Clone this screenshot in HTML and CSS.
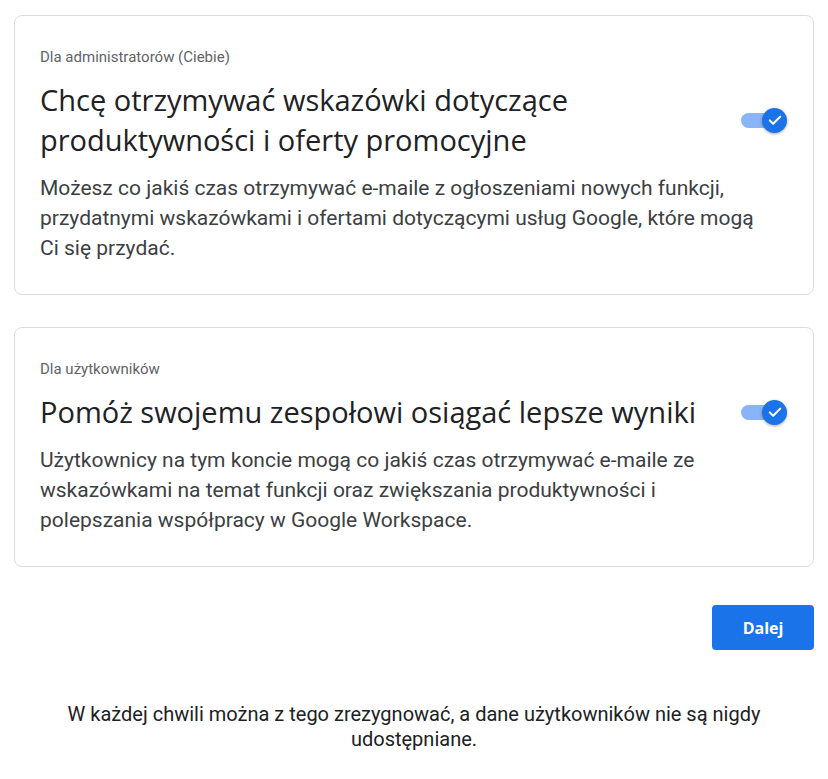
FILE: index.html
```html
<!DOCTYPE html>
<html>
<head>
	<meta charset="utf-8">
	<title>Wskazówki i oferty</title>
	<link rel="stylesheet" href="styles.css">
</head>
<body>
	<div class="strona">
		<div class="karta">
			<div class="etykieta">Dla administratorów (Ciebie)</div>
			<div class="wiersz">
				<h2 class="tytul">Chcę otrzymywać wskazówki dotyczące produktywności i oferty promocyjne</h2>
				<div class="przelacznik">
					<span class="tor"></span>
					<span class="galka">
						<svg width="18" height="18" viewBox="0 0 24 24"><path d="M5 12.5l4.5 4.5 9.5-9.5" fill="none" stroke="#fff" stroke-width="2.8" stroke-linecap="round" stroke-linejoin="round"/></svg>
					</span>
				</div>
			</div>
			<p class="opis">Możesz co jakiś czas otrzymywać e-maile z ogłoszeniami nowych funkcji, przydatnymi wskazówkami i ofertami dotyczącymi usług Google, które mogą Ci się przydać.</p>
		</div>

		<div class="karta">
			<div class="etykieta">Dla użytkowników</div>
			<div class="wiersz">
				<h2 class="tytul">Pomóż swojemu zespołowi osiągać lepsze wyniki</h2>
				<div class="przelacznik">
					<span class="tor"></span>
					<span class="galka">
						<svg width="18" height="18" viewBox="0 0 24 24"><path d="M5 12.5l4.5 4.5 9.5-9.5" fill="none" stroke="#fff" stroke-width="2.8" stroke-linecap="round" stroke-linejoin="round"/></svg>
					</span>
				</div>
			</div>
			<p class="opis">Użytkownicy na tym koncie mogą co jakiś czas otrzymywać e-maile ze wskazówkami na temat funkcji oraz zwiększania produktywności i polepszania współpracy w Google Workspace.</p>
		</div>

		<div class="akcje">
			<button class="przycisk">Dalej</button>
		</div>

		<p class="stopka">W każdej chwili można z tego zrezygnować, a dane użytkowników nie są nigdy udostępniane.</p>
	</div>
</body>
</html>
```

FILE: styles.css
```css
* {
	box-sizing: border-box;
}

body {
	margin: 0;
	background: #fff;
	font-family: Roboto, "Liberation Sans", sans-serif;
	color: #202124;
}

.strona {
	padding: 15px 14px 0 14px;
}

.karta {
	border: 1px solid #dadce0;
	border-radius: 8px;
	padding: 31px 26px 31px 25px;
	margin-bottom: 32px;
}

.etykieta {
	font-size: 15px;
	line-height: 20px;
	color: #5f6368;
}

.wiersz {
	display: flex;
	align-items: center;
	justify-content: space-between;
	margin-top: 13px;
}

.tytul {
	flex: 1;
	margin: 0;
	font-family: "Open Sans", sans-serif;
	font-size: 29px;
	font-weight: 400;
	line-height: 40px;
	color: #202124;
	max-width: 680px;
}

.przelacznik {
	position: relative;
	width: 46px;
	height: 25px;
	flex-shrink: 0;
	margin-left: 20px;
}

.tor {
	position: absolute;
	left: 0;
	top: 5px;
	width: 40px;
	height: 15px;
	border-radius: 8px;
	background: #8ab4f8;
}

.galka {
	position: absolute;
	right: 0;
	top: 0;
	width: 25px;
	height: 25px;
	border-radius: 50%;
	background: #1a73e8;
	box-shadow: 0 1px 3px rgba(0, 0, 0, .35);
	display: flex;
	align-items: center;
	justify-content: center;
}

.opis {
	margin: 13px 0 0 0;
	font-size: 21px;
	line-height: 30px;
	color: #3c4043;
	max-width: 715px;
}

.akcje {
	display: flex;
	justify-content: flex-end;
	margin-top: 38px;
}

.przycisk {
	width: 102px;
	height: 45px;
	border: none;
	border-radius: 4px;
	background: #1a73e8;
	color: #fff;
	font-family: "Open Sans", sans-serif;
	font-size: 16px;
	font-weight: 700;
}

.stopka {
	margin: 52px 20px 0 20px;
	text-align: center;
	font-size: 20px;
	line-height: 25px;
	color: #202124;
}
```
